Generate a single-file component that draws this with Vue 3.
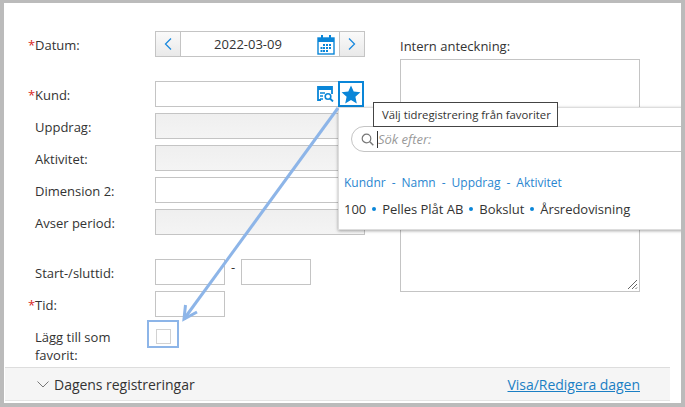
<script setup>
const greyRows = [
  { label: 'Uppdrag:', disabled: true },
  { label: 'Aktivitet:', disabled: true },
  { label: 'Dimension 2:', disabled: false },
  { label: 'Avser period:', disabled: true }
]
const headers = ['Kundnr', 'Namn', 'Uppdrag', 'Aktivitet']
const values = ['100', 'Pelles Plåt AB', 'Bokslut', 'Årsredovisning']
</script>

<template>
  <div class="frame">
    <div class="sheet">
      <main class="form">
        <section class="left">
          <div class="row row-gap">
            <label class="label"><i class="req">*</i>Datum:</label>
            <div class="date">
              <button class="step">
                <svg width="10" height="14" viewBox="0 0 10 14"><path d="M8 1.5 2.5 7 8 12.5" fill="none" stroke="#1b8ade" stroke-width="1.3"/></svg>
              </button>
              <div class="date-mid">
                <span>2022-03-09</span>
                <svg class="cal" width="18" height="21" viewBox="0 0 18 21">
                  <rect x="1" y="4" width="16" height="16" fill="#fff" stroke="#0a86d8" stroke-width="1.4"/>
                  <rect x="1" y="4" width="16" height="4" fill="#0a86d8"/>
                  <rect x="4" y="1" width="2" height="5" fill="#0a86d8"/>
                  <rect x="12" y="1" width="2" height="5" fill="#0a86d8"/>
                  <g fill="#0a86d8">
                    <rect x="6" y="10" width="2" height="2"/><rect x="9" y="10" width="2" height="2"/><rect x="12" y="10" width="2" height="2"/>
                    <rect x="3.5" y="13" width="2" height="2"/><rect x="6" y="13" width="2" height="2"/><rect x="9" y="13" width="2" height="2"/><rect x="12" y="13" width="2" height="2"/>
                    <rect x="3.5" y="16" width="2" height="2"/><rect x="6" y="16" width="2" height="2"/><rect x="9" y="16" width="2" height="2"/>
                  </g>
                </svg>
              </div>
              <button class="step">
                <svg width="10" height="14" viewBox="0 0 10 14"><path d="M2 1.5 7.5 7 2 12.5" fill="none" stroke="#1b8ade" stroke-width="1.3"/></svg>
              </button>
            </div>
          </div>

          <div class="row">
            <label class="label"><i class="req">*</i>Kund:</label>
            <div class="kund">
              <div class="field kund-input">
                <svg width="17" height="16" viewBox="0 0 17 16">
                  <path d="M4 14H1V1h14v7" fill="none" stroke="#0a86d8" stroke-width="1.8"/>
                  <rect x="1" y="1" width="14" height="3" fill="#0a86d8"/>
                  <path d="M3 7h5M3 10h3M3 13h3" stroke="#0a86d8" stroke-width="1.5"/>
                  <circle cx="11" cy="10.5" r="2.8" fill="none" stroke="#0a86d8" stroke-width="1.6"/>
                  <path d="m13 12.5 3 3" stroke="#0a86d8" stroke-width="1.8"/>
                </svg>
              </div>
              <button class="star">
                <svg width="20" height="19" viewBox="0 0 20 19"><path d="M10 .5 12.7 6.6 19.4 7.3 14.4 11.8 15.8 18.4 10 15 4.2 18.4 5.6 11.8.6 7.3 7.3 6.6Z" fill="#0a86d8"/></svg>
              </button>
            </div>
          </div>

          <div v-for="(r, i) in greyRows" :key="r.label" class="row" :class="{ 'row-gap': i === 3 }">
            <label class="label"><i class="slot"></i>{{ r.label }}</label>
            <div class="field wide" :class="{ off: r.disabled }"></div>
          </div>

          <div class="row">
            <label class="label"><i class="slot"></i>Start-/sluttid:</label>
            <div class="times">
              <div class="field short"></div>
              <span class="dash">-</span>
              <div class="field short"></div>
            </div>
          </div>

          <div class="row">
            <label class="label"><i class="req">*</i>Tid:</label>
            <div class="field short"></div>
          </div>

          <div class="row fav">
            <label class="label fav-label"><i class="slot"></i><span>Lägg till som<br>favorit:</span></label>
            <div class="check-wrap"><span class="check"></span></div>
          </div>
        </section>

        <section class="right">
          <label class="note-label">Intern anteckning:</label>
          <div class="note">
            <svg class="grip" width="11" height="11" viewBox="0 0 11 11"><path d="M1 10 10 1M5 10l5-5M8.500 10 10 8.500" stroke="#666" stroke-width="1"/></svg>
          </div>
        </section>
      </main>

      <footer class="foot">
        <div class="foot-bar">
          <span class="toggle">
            <svg width="12" height="7" viewBox="0 0 12 7"><path d="M.5.5 6 6 11.500.5" fill="none" stroke="#777" stroke-width="1"/></svg>
            Dagens registreringar
          </span>
          <a class="day-link">Visa/Redigera dagen</a>
        </div>
      </footer>

      <div class="popup">
        <div class="tip">Välj tidregistrering från favoriter</div>
        <div class="search">
          <svg width="13" height="13" viewBox="0 0 13 13"><circle cx="5.500" cy="5.500" r="4.300" fill="none" stroke="#777" stroke-width="1.200"/><path d="m8.800 8.800 3.500 3.500" stroke="#777" stroke-width="1.400"/></svg>
          <span class="caret"></span>
          <span class="placeholder">Sök efter:</span>
        </div>
        <div class="cols">
          <template v-for="(h, i) in headers" :key="h">
            <span v-if="i" class="sep">-</span>
            <span>{{ h }}</span>
          </template>
        </div>
        <div class="vals">
          <template v-for="(v, i) in values" :key="v">
            <span v-if="i" class="dot"></span>
            <span>{{ v }}</span>
          </template>
        </div>
      </div>

      <div class="mark"></div>
      <svg class="arrow" width="685" height="407" viewBox="0 0 685 407">
        <path d="M338 108 184 319" fill="none" stroke="#8db5e8" stroke-width="3"/>
        <path d="M185.500 305 184 319 197 312" fill="none" stroke="#8db5e8" stroke-width="3"/>
      </svg>
    </div>
  </div>
</template>

<style>
html, body { margin: 0; background: #bbb; }
</style>

<style scoped>
.frame {
  width: 685px;
  height: 407px;
  box-sizing: border-box;
  padding: 3px 4px 4px;
  background: #bbb;
  font-family: "Open Sans", sans-serif;
  font-size: 13px;
  color: #333;
}
.sheet {
  position: relative;
  height: 400px;
  background: #fff;
  overflow: hidden;
  display: flex;
  flex-direction: column;
}
.form {
  flex: 1;
  display: flex;
  padding-top: 28px;
  min-height: 0;
}
.left {
  width: 361px;
  padding-left: 24px;
  box-sizing: border-box;
  display: flex;
  flex-direction: column;
  gap: 6px;
}
.row { display: flex; height: 26px; align-items: center; }
.row-gap { margin-bottom: 18px; }
.label {
  width: 127px;
  flex: none;
  display: flex;
  align-items: center;
  line-height: 18px;
  padding-top: 2px;
  box-sizing: border-box;
}
.req { width: 7px; color: #d9281e; font-style: normal; }
.slot { width: 7px; flex: none; }
.field {
  height: 26px;
  box-sizing: border-box;
  border: 1px solid #c4c4c4;
  background: #fff;
}
.wide { width: 210px; }
.off { background: linear-gradient(#efefef, #f4f4f4); }
.short { width: 70px; }
.date { display: flex; height: 26px; width: 210px; box-sizing: border-box; }
.step {
  width: 26px;
  height: 26px;
  padding: 0;
  flex: none;
  display: flex;
  align-items: center;
  justify-content: center;
  border: 1px solid #c4c4c4;
  background: linear-gradient(#fafafa, #e9e9e9);
}
.date-mid {
  flex: 1;
  position: relative;
  display: flex;
  align-items: center;
  justify-content: center;
  border-top: 1px solid #c4c4c4;
  border-bottom: 1px solid #c4c4c4;
  padding-right: 24px;
}
.cal { position: absolute; right: 4px; top: 2px; }
.kund { display: flex; width: 210px; }
.kund-input {
  width: 183px;
  flex: none;
  display: flex;
  align-items: center;
  justify-content: flex-end;
  padding-right: 4px;
  border-right: 0;
}
.star {
  width: 26px;
  height: 26px;
  padding: 0;
  box-sizing: border-box;
  border: 2px solid #0a86d8;
  background: #fff;
  display: flex;
  align-items: center;
  justify-content: center;
}
.times { display: flex; }
.dash { width: 16px; text-align: center; line-height: 18px; margin-top: -1px; }
.fav { height: 36px; margin-top: 5px; align-items: flex-start; }
.fav-label { align-items: flex-start; padding-top: 0; }
.check-wrap { display: flex; padding: 1px 0 0 1px; }
.check {
  width: 15px;
  height: 15px;
  box-sizing: border-box;
  border: 1px solid #d2d2d2;
  background: #fff;
}
.right {
  padding: 6px 0 0 35px;
  width: 240px;
  flex: none;
}
.note-label { display: block; height: 22px; line-height: 18px; }
.note {
  position: relative;
  width: 240px;
  height: 233px;
  box-sizing: border-box;
  border: 1px solid #c4c4c4;
}
.grip { position: absolute; right: 1px; bottom: 1px; }
.foot {
  flex: none;
  height: 36px;
  margin-left: 1px;
  box-sizing: border-box;
  border-top: 1px solid #ddd;
  padding-bottom: 2px;
  width: 665px;
}
.foot-bar {
  height: 33px;
  background: #f5f5f5;
  display: flex;
  align-items: center;
  justify-content: space-between;
  padding: 0 30px 0 32px;
  font-size: 14px;
  letter-spacing: -0.03px;
  border-bottom: 1px solid #e4e4e4;
  box-sizing: border-box;
}
.toggle { display: flex; align-items: center; gap: 5px; }
.day-link { color: #1b7fc4; text-decoration: underline; }
.popup {
  position: absolute;
  left: 334px;
  top: 104px;
  width: 360px;
  height: 123px;
  box-sizing: border-box;
  background: #fff;
  border: 1px solid #ddd;
  box-shadow: 0 1px 3px 0 rgba(0, 0, 0, .35);
  padding: 18px 0 0 12px;
}
.tip {
  position: absolute;
  left: 34px;
  top: -6px;
  width: 185px;
  height: 25px;
  box-sizing: border-box;
  border: 1px solid #444;
  background: #fff;
  padding-left: 8px;
  line-height: 23px;
  font-size: 11.3px;
  white-space: nowrap;
  z-index: 1;
}
.search {
  width: 360px;
  height: 26px;
  box-sizing: border-box;
  border: 1px solid #c4c4c4;
  border-radius: 13px 0 0 13px;
  display: flex;
  align-items: center;
  padding-left: 9px;
}
.caret { width: 1px; height: 17px; background: #333; margin-left: 3px; }
.placeholder { color: #999; font-style: italic; }
.cols {
  display: flex;
  gap: 6px;
  margin: 22px 0 0 -7px;
  font-size: 12px;
  line-height: 18px;
  color: #2a86d0;
}
.sep { color: #2a86d0; }
.vals {
  display: flex;
  align-items: center;
  gap: 6px;
  margin: 8px 0 0 -7px;
  line-height: 18px;
  letter-spacing: -0.03px;
}
.dot { width: 4px; height: 4px; border-radius: 50%; background: #0a86d8; }
.mark {
  position: absolute;
  left: 143px;
  top: 317px;
  width: 32px;
  height: 28px;
  box-sizing: border-box;
  border: 2px solid #8db5e8;
}
.arrow { position: absolute; left: -4px; top: -3px; pointer-events: none; }
</style>
